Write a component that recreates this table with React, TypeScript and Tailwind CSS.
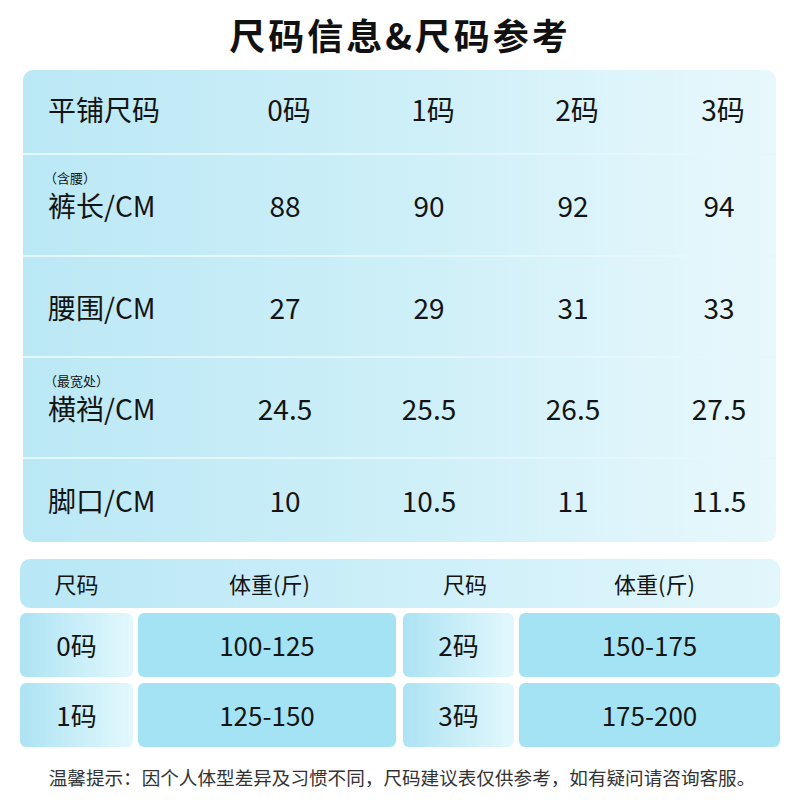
import React from "react";

const font = { fontFamily: '"Noto Sans CJK SC", "Noto Sans", sans-serif' };

type Row = { label: string; note?: string; values: string[]; h: string };

const rows: Row[] = [
  { label: "裤长/CM", note: "（含腰）", values: ["88", "90", "92", "94"], h: "h-[102px]" },
  { label: "腰围/CM", values: ["27", "29", "31", "33"], h: "h-[101px]" },
  { label: "横裆/CM", note: "（最宽处）", values: ["24.5", "25.5", "26.5", "27.5"], h: "h-[101px]" },
  { label: "脚口/CM", values: ["10", "10.5", "11", "11.5"], h: "h-[83px]" },
];

function MainRow({ label, note, values, h, last }: Row & { last?: boolean }) {
  return (
    <div
      className={`grid grid-cols-[189px_146px_142px_146px_1fr] items-center ${h} ${
        last ? "pb-[2px]" : "border-b-2 border-[#e4f7fc]"
      }`}
    >
      <div className="pl-[25px] flex items-center">
        <span className="relative">
          {note && (
            <span className="absolute left-[-4px] bottom-[100%] mb-[7px] text-[13px] leading-none whitespace-nowrap">
              {note}
            </span>
          )}
          <span>{label}</span>
        </span>
      </div>
      {values.map((v, i) => (
        <div key={i} className={`text-center ${i === 3 ? "pl-[16px]" : ""}`}>
          {v}
        </div>
      ))}
    </div>
  );
}

function SizeCell({ children }: { children: React.ReactNode }) {
  return (
    <div className="h-[64px] rounded-[6px] bg-gradient-to-r from-[#ace3f3] to-[#e3f8fd] flex items-center justify-center">
      {children}
    </div>
  );
}

function WeightCell({ children }: { children: React.ReactNode }) {
  return (
    <div className="h-[64px] rounded-[6px] bg-[#a4e3f3] flex items-center justify-center">
      {children}
    </div>
  );
}

export default function App() {
  return (
    <div className="w-[800px] h-[800px] bg-white text-[#141414] overflow-hidden" style={font}>
      <div className="h-[70px] flex items-center justify-center pb-[2px]">
        <h1 className="text-[36px] font-bold tracking-[3px] leading-none text-[#111]">
          尺码信息&amp;尺码参考
        </h1>
      </div>

      <div className="mx-[23px] w-[753px] rounded-[10px] bg-gradient-to-r from-[#bbe8f5] via-[#cdeff8] to-[#e8f8fc] text-[28px] leading-none overflow-hidden">
        <div className="grid grid-cols-[189px_146px_142px_146px_1fr] items-center h-[85px] border-b-2 border-[#e4f7fc] pb-[6px]">
          <div className="pl-[25px]">平铺尺码</div>
          <div className="text-center pl-[8px]">0码</div>
          <div className="text-center pl-[8px]">1码</div>
          <div className="text-center pl-[8px]">2码</div>
          <div className="text-center pl-[24px]">3码</div>
        </div>
        {rows.map((r, i) => (
          <MainRow key={i} {...r} last={i === rows.length - 1} />
        ))}
      </div>

      <div className="mt-[17px] mx-[20px] w-[760px] flex flex-col gap-[5px]">
        <div className="h-[49px] rounded-[10px] bg-gradient-to-r from-[#b8e7f5] via-[#cdeff9] to-[#e2f6fb] grid grid-cols-[113px_263px_118px_1fr] gap-[5px] items-center text-[22px] leading-none pb-[2px]">
          <div className="text-center">尺码</div>
          <div className="text-center">体重(斤)</div>
          <div className="text-center">尺码</div>
          <div className="text-center">体重(斤)</div>
        </div>
        <div className="grid grid-cols-[113px_258px_113px_1fr] gap-x-[5px] gap-y-[6px] text-[26px] leading-none">
          <SizeCell>0码</SizeCell>
          <WeightCell>100-125</WeightCell>
          <div className="ml-[2px]">
            <SizeCell>2码</SizeCell>
          </div>
          <WeightCell>150-175</WeightCell>
          <SizeCell>1码</SizeCell>
          <WeightCell>125-150</WeightCell>
          <div className="ml-[2px]">
            <SizeCell>3码</SizeCell>
          </div>
          <WeightCell>175-200</WeightCell>
        </div>
      </div>

      <div className="mt-[21px] text-center text-[18.6px] leading-none text-[#333] pl-[4px]">
        温馨提示：因个人体型差异及习惯不同，尺码建议表仅供参考，如有疑问请咨询客服。
      </div>
    </div>
  );
}
